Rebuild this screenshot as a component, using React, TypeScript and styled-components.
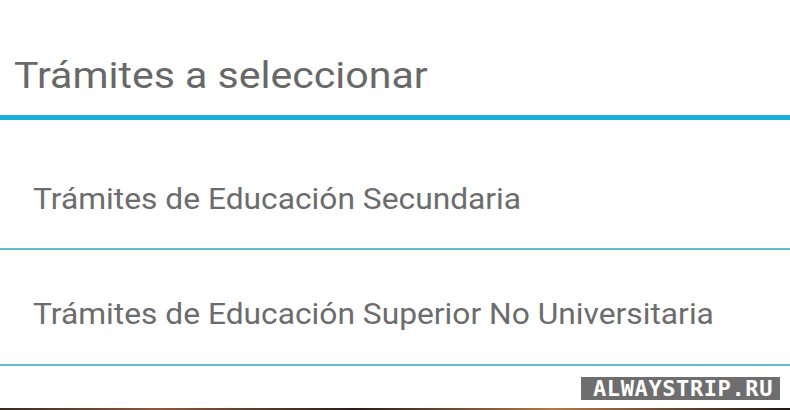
import React from "react";
import styled, { createGlobalStyle } from "styled-components";

const Global = createGlobalStyle`
  html, body { margin: 0; padding: 0; background: #ffffff; }
  body { width: 790px; height: 410px; overflow: hidden; font-family: Roboto, "Liberation Sans", sans-serif; }
`;

const Page = styled.div`
  width: 790px;
  height: 410px;
  display: flex;
  flex-direction: column;
  background: #ffffff;
  position: relative;
`;

const Header = styled.h2`
  margin: 0;
  padding: 56px 0 19px 14px;
  font-family: Roboto, "Liberation Sans", sans-serif;
  font-weight: 400;
  font-size: 37px;
  line-height: 40px;
  color: #686868;
  border-bottom: 5px solid #17afdb;
`;

const Wide = styled.span<{ $scale: number }>`
  display: inline-block;
  white-space: nowrap;
  transform: scaleX(${(p) => p.$scale});
  transform-origin: left center;
`;

const List = styled.ul`
  margin: 0;
  padding: 0;
  list-style: none;
  display: flex;
  flex-direction: column;
`;

const Item = styled.li<{ $top: number; $bottom: number }>`
  padding: ${(p) => p.$top}px 0 ${(p) => p.$bottom}px 33px;
  border-bottom: 2px solid #5ec0d0;
  font-family: Roboto, "Liberation Sans", sans-serif;
  font-size: 29px;
  line-height: 32px;
  color: #6c6c6c;
`;

const BottomStrip = styled.div`
  margin-top: auto;
  height: 2px;
  background: linear-gradient(90deg, #3a2a22, #8a5a40 20%, #2a1e18 45%, #b07a50 70%, #201814);
`;

const Watermark = styled.div`
  position: absolute;
  right: 10px;
  bottom: 10px;
  height: 23px;
  display: flex;
  align-items: center;
  background: #6e6e6e;
  color: #ffffff;
  font-family: "DejaVu Sans Mono", "Liberation Mono", monospace;
  font-weight: 700;
  font-size: 22px;
  line-height: 23px;
  padding: 0 7px 0 12px;
  letter-spacing: 0.6px;
`;

export default function App() {
  return (
    <Page>
      <Global />
      <Header>
        <Wide $scale={1.11}>Trámites a seleccionar</Wide>
      </Header>
      <List>
        <Item $top={63} $bottom={33}>
          <Wide $scale={1.095}>Trámites de Educación Secundaria</Wide>
        </Item>
        <Item $top={48} $bottom={34}>
          <Wide $scale={1.095}>Trámites de Educación Superior No Universitaria</Wide>
        </Item>
      </List>
      <BottomStrip />
      <Watermark>ALWAYSTRIP.RU</Watermark>
    </Page>
  );
}
